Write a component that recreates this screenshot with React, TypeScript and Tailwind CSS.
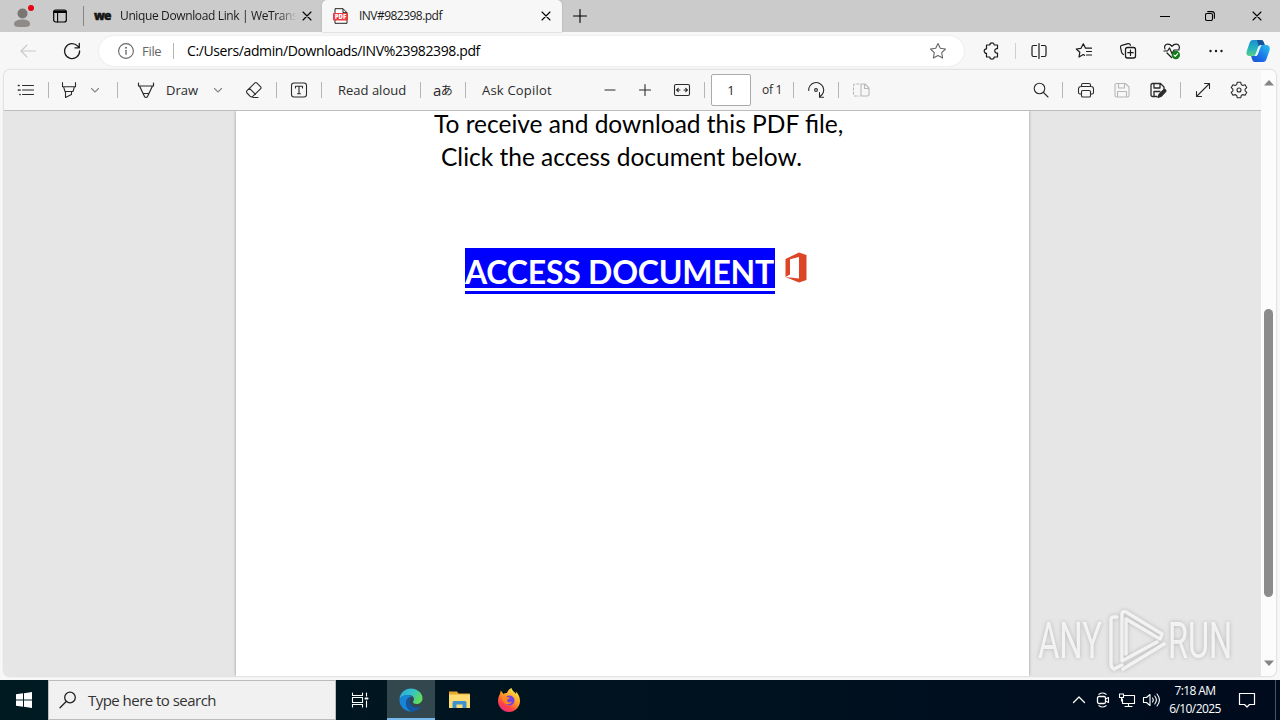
import type { ReactNode } from "react";
import clsx from "clsx";

function Icon({ className, size = 18, children }: { className?: string; size?: number; children: ReactNode }) {
  return (
    <svg
      width={size}
      height={size}
      viewBox={`0 0 ${size} ${size}`}
      fill="none"
      stroke="currentColor"
      strokeWidth="1.1"
      strokeLinecap="round"
      strokeLinejoin="round"
      className={clsx("shrink-0", className)}
    >
      {children}
    </svg>
  );
}

function Sep({ className }: { className?: string }) {
  return <div className={clsx("h-4 w-px shrink-0 bg-[#b5b5b5]", className)} />;
}

function CloseIcon({ className }: { className?: string }) {
  return (
    <Icon size={10} className={className}>
      <path d="M1 1l8 8M9 1L1 9" />
    </Icon>
  );
}

function Chevron({ className }: { className?: string }) {
  return (
    <Icon size={10} className={clsx("text-[#888]", className)}>
      <path d="M1.500 3.500L5 7l3.500-3.500" />
    </Icon>
  );
}

function TabStrip() {
  return (
    <div className="flex h-8 shrink-0 items-center bg-[#cbcbcb]">
      <svg width="24" height="24" viewBox="0 0 24 24" className="ml-3 shrink-0">
        <circle cx="10.500" cy="9.500" r="5" fill="#797573" />
        <path d="M2 20c0-3 3.500-4.500 8.500-4.500S18 17 18 20s-3.500 3-8 3-8 0-8-3z" fill="#8e8a88" />
        <circle cx="19" cy="4" r="3" fill="#e30613" />
      </svg>
      <Icon size={16} className="ml-4">
        <rect x="1.700" y="2" width="12.600" height="12" rx="2" strokeWidth="1.200" />
        <path d="M2.500 3.800h11" strokeWidth="2.400" />
        <path d="M5.600 5v9" />
      </Icon>
      <div className="ml-[15px] h-5 w-px bg-[#858585]" />

      <div className="ml-2.5 flex w-[221px] items-center">
        <span className="w-[26px] font-['Open_Sans'] text-[12px] leading-4 font-extrabold tracking-[-0.9px] text-[#151515] [-webkit-text-stroke:0.5px_#151515]">
          we
        </span>
        <span className="w-[177px] font-['Open_Sans'] text-[12px] leading-4 tracking-[-0.37px] whitespace-nowrap text-[#1b1b1b] [mask-image:linear-gradient(to_right,black_157px,transparent_177px)]">
          Unique Download Link | WeTrans
        </span>
        <CloseIcon className="ml-[5px]" />
      </div>

      <div className="ml-[7px] flex h-8 w-[240px] items-center rounded-t-[5px] bg-[#f7f7f7] shadow-[0_0_2px_#aaa]">
        <svg width="16" height="16" viewBox="0 0 16 16" className="ml-[11px] shrink-0">
          <path d="M2 .7h8l4 4v10.600H2z" fill="#fff" stroke="#222" />
          <path d="M10 .7v4h4" fill="none" stroke="#222" />
          <rect x="0" y="5" width="15" height="7.500" rx="1" fill="#ec3b3f" />
          <text x="7.500" y="11" textAnchor="middle" fontFamily="Open Sans" fontSize="6" fontWeight="800" fill="#fff">
            PDF
          </text>
        </svg>
        <span className="ml-2.5 w-[182px] font-['Open_Sans'] text-[12px] leading-4 tracking-[-0.53px] text-[#1b1b1b]">INV#982398.pdf</span>
        <CloseIcon />
      </div>

      <Icon size={14} className="ml-[11px]">
        <path d="M7 .5v13M.5 7h13" />
      </Icon>
      <Icon size={10} className="mr-[35px] ml-auto">
        <path d="M0 5.500h10" />
      </Icon>
      <Icon size={10} className="mr-[37px]">
        <rect x=".5" y="2.500" width="7" height="7" rx="1.500" />
        <path d="M2.700.6H7A2.400 2.400 0 0 1 9.400 3v4.300" />
      </Icon>
      <CloseIcon className="mr-[18px]" />
    </div>
  );
}

function CopilotLogo() {
  return (
    <svg width="24" height="24" viewBox="0 0 24 24" className="ml-[21px] shrink-0">
      <defs>
        <linearGradient id="cpA" x1="0" y1="0" x2="0" y2="1">
          <stop offset="0" stopColor="#1b8fce" />
          <stop offset=".5" stopColor="#23b1c0" />
          <stop offset="1" stopColor="#58d08b" />
        </linearGradient>
        <linearGradient id="cpB" x1="1" y1="0" x2="0" y2="1">
          <stop offset="0" stopColor="#29c3ef" />
          <stop offset=".6" stopColor="#1a6fe8" />
          <stop offset="1" stopColor="#1b50d0" />
        </linearGradient>
      </defs>
      <path d="M7 1h8c2 0 2.500 1.500 3 3l.8 2h-3c-2 0-2.800 1-3.400 3l-1.800 5c-.6 2-1.500 3-3.600 3H3.500C.5 17 0 14.500.8 12L3.500 4C4.200 2 5 1 7 1z" fill="url(#cpA)" />
      <path d="M11 1h4c2 0 2.500 1.500 3 3l.8 2h-3c-1.500 0-2.500.7-3 2z" fill="#14539a" />
      <path d="M17 23H9c-2 0-2.500-1.500-3-3l-.9-3h3c2 0 2.800-1 3.400-3l1.800-5c.6-2 1.500-3 3.600-3h3.600c3 0 3.800 3 3 5.500L20.500 20c-.7 2-1.500 3-3.500 3z" fill="url(#cpB)" />
      <path d="M12 8.500c.7-1.800 1.700-2.500 3.300-2.500l-3.500 9.500c-.6 1-1.300 1.500-2.900 1.500z" fill="#e9fbff" />
    </svg>
  );
}

function AddressRow() {
  return (
    <div className="flex h-[38px] shrink-0 items-center text-[#1b1b1b]">
      <Icon className="ml-[19px] text-[#c9c9c9]">
        <path d="M16.500 9H2M8 3L2 9l6 6" />
      </Icon>
      <Icon className="ml-[26px]">
        <path d="M16.600 9A7.500 7.500 0 1 1 14.500 3.900L16.300 5.700M16.300 1.500v4.300H12" strokeWidth="1.300" />
      </Icon>
      <div className="ml-[18px] flex h-[30px] w-[865px] items-center rounded-full bg-white shadow-[0_0_2px_#ddd]">
        <Icon size={16} className="ml-[19px] text-[#666]">
          <circle cx="8" cy="8" r="7.400" />
          <path d="M8 7.300v4" strokeWidth="1.300" />
          <circle cx="8" cy="4.800" r=".4" fill="currentColor" />
        </Icon>
        <span className="ml-2 w-[31px] font-['Open_Sans'] text-[13px] leading-5 tracking-[-0.3px] text-[#666]">File</span>
        <Sep className="bg-[#999]" />
        <span className="ml-[13px] font-['Open_Sans'] text-[14px] leading-5 tracking-[-0.38px] whitespace-nowrap text-black">
          C:/Users/admin/Downloads/INV%23982398.pdf
        </span>
        <Icon className="mr-[17px] ml-auto text-[#666]">
          <path d="M9 1.500l2.300 4.800 5.200.7-3.800 3.700.9 5.300L9 13.500 4.400 16l.9-5.300L1.500 7l5.200-.7z" />
        </Icon>
      </div>
      <Icon className="ml-[19px]">
        <path
          d="M3.500 3h3.300a2.200 2.200 0 0 1 4.400 0h3.300v3.600h-1a2.300 2.300 0 0 0 0 4.500h1V15h-3.300a2.200 2.200 0 0 1-4.400 0H3.500v-3.600a2.300 2.300 0 0 1 0-4.600z"
          strokeWidth="1.200"
        />
      </Icon>
      <Sep className="ml-[14px] bg-[#d0d0d0]" />
      <Icon className="ml-3.5">
        <path d="M9 1.500v15M6.500 3.500h-3A1.500 1.500 0 0 0 2 5v8a1.500 1.500 0 0 0 1.500 1.500h3M11.500 3.500h3A1.500 1.500 0 0 1 16 5v8a1.500 1.500 0 0 1-1.500 1.500h-3" strokeWidth="1.200" />
      </Icon>
      <Icon className="ml-[27px]">
        <path d="M9.500 13.300L8.300 12.500 4 15l.8-4.700L1.300 7 6 6.300l2.300-4.500 2.200 4.400h6M11.500 9.500h5M11.500 13h5" strokeWidth="1.200" />
      </Icon>
      <Icon className="ml-[26px]">
        <rect x="6.500" y="5.500" width="10" height="10.500" rx="2" strokeWidth="1.300" />
        <path d="M11.500 8v5.500M8.800 10.700h5.400M4.500 12.500c-1-.5-1.500-1-1.800-2L1.500 5.300c-.2-1 .3-1.700 1.300-2L9 1.600c1.300-.3 2 .2 2.500 1.600" strokeWidth="1.200" />
      </Icon>
      <Icon className="ml-[26px]">
        <path d="M2 7C.8 4.500 2.300 2.200 4.700 2.200 6.500 2.200 8 3 9 4.300c1-1.300 2.500-2.100 4.300-2.100C15.800 2.200 17.200 4.500 16 7.300M4 11l4.500 4.500M1 9h3.500L6.500 6 9 11.500l2-3.500h5" strokeWidth="1.200" />
        <circle cx="12.800" cy="13" r="4.200" fill="#127b1a" stroke="none" />
        <path d="M11 13.200l1.200 1.200 2.500-2.700" stroke="#fff" />
      </Icon>
      <Icon className="ml-[26px]">
        <g fill="currentColor" stroke="none">
          <circle cx="3.500" cy="9" r="1.200" />
          <circle cx="9" cy="9" r="1.200" />
          <circle cx="14.500" cy="9" r="1.200" />
        </g>
      </Icon>
      <CopilotLogo />
    </div>
  );
}

function PdfToolbar() {
  return (
    <div className="flex h-[41px] shrink-0 items-center border-b border-[#bdbdbd] bg-[#f7f7f7] font-['Open_Sans'] text-[13px] leading-5 whitespace-nowrap text-[#2b2b2b]">
      <Icon className="ml-[13px]">
        <path d="M5.500 4.500h11M5.500 9h11M5.500 13.500h11" />
        <path d="M1.500 4.500h.5M3 9h0M3 13.500h0M1.500 9h.3" strokeWidth="1.700" />
      </Icon>
      <Sep className="ml-[13px]" />
      <Icon className="ml-[11px]">
        <path d="M2.500 1.500v4.200h13V1.500M3.500 5.700l1.500 4.800h8l1.500-4.800M5.500 10.500v6l6-3v-3" />
      </Icon>
      <Chevron className="ml-3" />
      <Sep className="ml-[17px]" />
      <Icon className="ml-[19px]">
        <path d="M1.500 2v3h15V2M2.500 5l5 10.500a1.700 1.700 0 0 0 3 0l5-10.500M6.500 12.500h5" strokeWidth="1.200" />
      </Icon>
      <span className="ml-[11px] w-[34px]">Draw</span>
      <Chevron className="ml-[13px]" />
      <Icon className="ml-[22px]">
        <path d="M2 9.700L10 1.900a1.200 1.200 0 0 1 1.700 0l4 4a1.200 1.200 0 0 1 0 1.700L8 15.200a2.200 2.200 0 0 1-3 0L2 12a1.600 1.600 0 0 1 0-2.300zM4.500 7.300l6 6M8 16.500h5" />
      </Icon>
      <Sep className="ml-[13px]" />
      <Icon className="ml-[13px]">
        <rect x="1.500" y="2" width="15" height="14" rx="2.500" />
        <path d="M5.500 7V5.200h7V7M9 5.200v7.600M7.500 12.800h3" />
      </Icon>
      <Sep className="ml-[13px]" />
      <span className="ml-4 w-[70px]">Read aloud</span>
      <Sep className="ml-3" />
      <span className="ml-3 flex w-5 items-center">
        <span className="text-[15px] tracking-[-0.5px]">a</span>
        <span className="font-['Noto_Sans_CJK_JP',sans-serif] text-[12px]">あ</span>
      </span>
      <Sep className="ml-3" />
      <span className="ml-4 w-[72px] tracking-[0.2px]">Ask Copilot</span>
      <Icon className="ml-[47px]">
        <path d="M4 9h10" />
      </Icon>
      <Icon className="ml-[17px]">
        <path d="M3.500 9h11M9 3.500v11" />
      </Icon>
      <Icon className="ml-[19px]">
        <rect x="1.500" y="3.500" width="15" height="11" rx="1.500" />
        <path d="M7 9H3.800M5.300 7.300L3.600 9l1.700 1.700M11 9h3.200M12.700 7.300L14.400 9l-1.700 1.700" />
      </Icon>
      <Sep className="ml-[13px]" />
      <div className="ml-1.5 flex h-8 w-10 items-center justify-center rounded-[2px] border border-[#aaa] bg-white">1</div>
      <span className="ml-[11px] w-5 text-[12px] tracking-[-0.3px]">of 1</span>
      <Sep className="ml-[11px]" />
      <Icon className="ml-[13px]">
        <path d="M1.700 9.500A7.500 7.500 0 1 1 13 15.500M12.500 11.500v4.700h4" />
        <circle cx="9" cy="9" r="1.400" />
      </Icon>
      <Sep className="ml-[13px]" />
      <Icon className="ml-[13px] text-[#b8b8b8]">
        <path d="M9 3h4l4 4v6.500a1.500 1.500 0 0 1-1.500 1.500H9zM12.500 3v4.500H17" />
        <path d="M7 3H3a1.500 1.500 0 0 0-1.500 1.500v9A1.500 1.500 0 0 0 3 15h4" strokeDasharray="2.200 2" />
      </Icon>
      <Icon className="ml-auto">
        <circle cx="7.500" cy="7.500" r="5.300" />
        <path d="M11.500 11.500l4.500 4.500" />
      </Icon>
      <Sep className="ml-3" />
      <Icon className="ml-3.5">
        <path d="M4.500 5.500V4A1.500 1.500 0 0 1 6 2.500h6A1.500 1.500 0 0 1 13.500 4v1.500M4.500 13H3a1.500 1.500 0 0 1-1.500-1.500V8A2.500 2.500 0 0 1 4 5.500h10A2.500 2.500 0 0 1 16.500 8v3.500A1.500 1.500 0 0 1 15 13h-1.500" />
        <rect x="4.500" y="9.500" width="9" height="6.500" rx="1.300" />
      </Icon>
      <Icon className="ml-[18px] text-[#b8b8b8]">
        <path d="M3.500 2.500h9L16 6v8.500a1.500 1.500 0 0 1-1.500 1.500h-11A1.500 1.500 0 0 1 2 14.500V4a1.500 1.500 0 0 1 1.500-1.500zM5.500 2.500V7h6V2.500M4.500 16v-5.500h9V16" />
      </Icon>
      <Icon className="ml-[18px]">
        <path d="M8 15.500H3.500A1.500 1.500 0 0 1 2 14V4a1.500 1.500 0 0 1 1.500-1.500h8L15 6v2M5 2.500V7h6V2.500M5 15.500v-5h6" strokeWidth="1.300" />
        <path d="M9 16.500l1-3.200 4.500-4.500a1.300 1.300 0 0 1 2 2L12 15.500z" fill="currentColor" />
      </Icon>
      <Sep className="ml-[13px]" />
      <Icon className="ml-[13px]">
        <path d="M2.500 15.500l13-13M10.500 2.500h5v5M2.500 10.500v5h5" />
      </Icon>
      <Icon className="mr-[13px] ml-[18px]">
        <path d="M7.200 1.300h3.600l.5 2.300 1.500.9 2.300-.8 1.700 3L15.100 8.200v1.600l1.700 1.500-1.700 3-2.300-.7-1.500.8-.5 2.300H7.200l-.5-2.300-1.500-.8-2.300.7-1.700-3 1.700-1.500V8.200L1.200 6.700l1.700-3 2.300.8 1.500-.9z" />
        <circle cx="9" cy="9" r="2" />
      </Icon>
    </div>
  );
}

function OfficeLogo() {
  return (
    <svg width="22" height="32" viewBox="0 0 22 32" className="mt-[4px] ml-[10px] shrink-0">
      <path d="M.5 7L14 .5 21.500 3v25L14 30.500.5 25l13.500 1.500V5L5 7.200v15.300L.5 25z" fill="#dc4526" />
    </svg>
  );
}

function Watermark() {
  return (
    <div className="absolute top-[606px] left-[1038px] flex h-[70px] w-[200px] items-center text-white/75 drop-shadow-[0_0_2px_rgba(0,0,0,0.28)]">
      <span className="w-[70px] origin-left scale-x-[0.655] font-[Roboto] text-[50px] leading-none font-normal">ANY</span>
      <svg width="58" height="64" viewBox="0 0 58 64" fill="none" stroke="currentColor" strokeWidth="3.400" strokeLinejoin="round" strokeLinecap="round" className="shrink-0">
        <path d="M9 8H6c-2 0-3 1-3 3v44c0 2 1 4 3 5l8-4M14 12v40l35-19M14 12V5c0-2 2-3 4-2l36 22-2 5-34-20v35M15 60l41-25" />
      </svg>
      <span className="ml-[2px] origin-left scale-x-[0.65] font-[Roboto] text-[50px] leading-none font-normal">RUN</span>
    </div>
  );
}

function DocumentView() {
  return (
    <div className="flex min-h-0 flex-1 overflow-hidden bg-[#e6e6e6]">
      <div className="ml-[232px] w-[793px] bg-white shadow-[0_0_3px_rgba(0,0,0,0.35)]">
        <div className="pl-[198px] font-[Lato] text-[24.500px] leading-[33px] whitespace-pre text-black">
          <p className="-mt-1">To receive and download this PDF file,</p>
          <p className="ml-[7px]">Click the access document below.</p>
        </div>
        <div className="mt-[75px] ml-[229px] flex items-start">
          <div className="h-[46px] w-[310px] bg-[#0000ff] font-[Lato] text-[32px] leading-10 font-bold whitespace-nowrap text-white">
            <div className="h-[40px] pt-1 tracking-[-0.22px]">ACCESS DOCUMENT</div>
            <div className="h-[3px] bg-white" />
          </div>
          <OfficeLogo />
        </div>
      </div>
    </div>
  );
}

function Scrollbar() {
  return (
    <div className="flex w-[15px] shrink-0 flex-col items-center bg-[#fcfcfc] text-[#858585]">
      <svg width="10" height="6" viewBox="0 0 10 6" className="mt-2.5">
        <path d="M0 5.500h10L5 0z" fill="currentColor" />
      </svg>
      <div className="mt-[223px] h-[288px] w-[9px] rounded-full bg-[#8b8b8b]" />
      <svg width="10" height="6" viewBox="0 0 10 6" className="mt-auto mb-[10px]">
        <path d="M0 .5h10L5 6z" fill="currentColor" />
      </svg>
    </div>
  );
}

function EdgeLogo() {
  return (
    <svg width="24" height="24" viewBox="0 0 24 24">
      <defs>
        <linearGradient id="edgeTop" x1="0" y1="0" x2="1" y2=".4">
          <stop offset="0" stopColor="#2aa8e0" />
          <stop offset=".6" stopColor="#36c4c5" />
          <stop offset="1" stopColor="#5fdb5d" />
        </linearGradient>
      </defs>
      <path d="M.5 11C1 5 6 .5 12 .5S23.500 5 23.500 10c0 4-3 6-6 6-2.300 0-3.500-1-3.500-2 0-.8 1-1.300 1-3 0-2-2-4-5-4-4.500 0-8.300 2-9.500 4z" fill="url(#edgeTop)" />
      <path d="M.5 11C2 8 5.500 6.800 9 7c3 .2 4.500 1.500 4.500 1.500C10 8.500 7 11 7 15c0 4.500 3.500 7.800 6 8.500C6 24 0 18.500.5 11z" fill="#1784d8" />
      <path d="M7.500 15c0-3.500 2-5.500 4.500-6-.7.800-1.500 2-1.500 4 0 4 3.500 6.500 7 6.500 2.300 0 3.800-1 4.500-1.200-1.500 3-5 5.200-9 5.200-3-.5-5.500-4-5.500-8.500z" fill="#1257a5" />
    </svg>
  );
}

function FirefoxLogo() {
  return (
    <svg width="24" height="24" viewBox="0 0 24 24">
      <defs>
        <linearGradient id="ffx" x1=".8" y1="0" x2=".2" y2="1">
          <stop offset="0" stopColor="#fff04a" />
          <stop offset=".45" stopColor="#ff9a25" />
          <stop offset=".75" stopColor="#ff3f48" />
          <stop offset="1" stopColor="#e52891" />
        </linearGradient>
      </defs>
      <path d="M3 6l.8-3.500L6.500 6c1-.8 2.300-1 3.500-1 1-3 3-4.500 4.500-5 .5 2.500 3 4 4.500 6l-.2-2.500C21.500 6 23 9 23 13c0 6-5 11-11 11S1 19 1 13c0-2.800.8-5 2-7z" fill="url(#ffx)" />
      <circle cx="12.500" cy="12.500" r="5" fill="#7542e5" />
      <path d="M5 8.500c2-1 4 .2 5.500.8l2.500.3c0 1.500-3 1.400-3 3s2.500 2.500 5 1c-1 3-6 4-8.500.5C5.500 12.500 5 10 5 8.500z" fill="#ff8a1e" />
    </svg>
  );
}

function Taskbar() {
  return (
    <div className="flex h-10 shrink-0 items-center bg-linear-to-r from-[#001a22] to-[#000b1d] text-white">
      <div className="flex w-12 justify-center">
        <svg width="16" height="16" viewBox="0 0 16 16" fill="#fff">
          <path d="M0 2.300L7 1.300v6.200H0zM8 1.200L16 0v7.500H8zM0 8.500h7v6.200l-7-1zM8 8.500h8V16l-8-1.200z" />
        </svg>
      </div>
      <div className="flex h-10 w-[288px] items-center border border-[#bcbcbc] bg-[#f1f1f1] text-[#222]">
        <Icon className="ml-2.5">
          <circle cx="11" cy="6.500" r="5.300" strokeWidth="1.300" />
          <path d="M7.200 10.500L1 16.700" strokeWidth="1.300" />
        </Icon>
        <span className="ml-[11px] font-['Open_Sans'] text-[15px] leading-5 tracking-[-0.53px] text-[#333]">Type here to search</span>
      </div>
      <Icon className="ml-[15px]">
        <path d="M1.500 2v2.500h10V2M1.500 16v-2.500h10V16M1.500 6.500h10v5h-10zM15.500 2v3M15.500 10v6" />
        <path d="M14.500 7.500h2" strokeWidth="2" />
      </Icon>
      <div className="ml-[18px] flex h-10 w-12 items-center justify-center border-b-2 border-[#76b9ed] bg-[#33474f] pt-[2px]">
        <EdgeLogo />
      </div>
      <svg width="22" height="20" viewBox="0 0 22 20" className="ml-[14px]">
        <path d="M0 1.500h8l1.500 2H20a1 1 0 0 1 1 1V18H0z" fill="#e7a92c" />
        <path d="M0 4.500h21V18H0z" fill="#ffdc73" />
        <path d="M3.500 18v-5.500a1.500 1.500 0 0 1 1.500-1.500h11a1.500 1.500 0 0 1 1.500 1.500V18h-4v-3.500h-6V18z" fill="#3e91cd" />
      </svg>
      <div className="ml-[26px]">
        <FirefoxLogo />
      </div>

      <Icon size={14} className="mr-[9px] ml-auto">
        <path d="M1.500 9.500L7 4l5.500 5.500" strokeWidth="1.300" />
      </Icon>
      <Icon size={16} className="mr-[7px]">
        <rect x="2.500" y="4.500" width="8" height="7" rx="1.500" strokeWidth="1.300" />
        <path d="M10.500 7l3-1.500v5l-3-1.500M4 2.300c2-1.500 5-1.500 7 0M4 13.700c2 1.500 5 1.500 7 0" />
      </Icon>
      <Icon size={18} className="mr-1.5">
        <path d="M6 4.500h10.500v8H4.500V8M10.500 12.500V15M7 15.500h7M1.500 3h4v3.500h-4zM3.500 6.500V10" />
      </Icon>
      <Icon size={18} className="mr-[9px]">
        <path d="M1.500 6.500h3l3.500-3v11l-3.500-3h-3zM10.500 7c1 1.300 1 2.700 0 4M12.800 5c2 2.500 2 5.500 0 8M15 3c3 3.700 3 8.300 0 12" />
      </Icon>
      <div className="mr-[17px] w-[52px] text-center font-['Open_Sans'] text-[12px] leading-[18px] tracking-[-0.6px] whitespace-nowrap">
        <div>7:18 AM</div>
        <div>6/10/2025</div>
      </div>
      <Icon size={18} className="mr-[19px]">
        <path d="M1.500 2.500h15v11h-5L9 16l-2.500-2.500h-5z" strokeWidth="1.200" />
      </Icon>
      <div className="mr-1 h-10 w-px bg-[#4b5562]" />
    </div>
  );
}

export default function App() {
  return (
    <div className="relative flex h-[720px] w-[1280px] flex-col overflow-hidden bg-[#f7f7f7]">
      <TabStrip />
      <AddressRow />
      <div className="mx-1 mb-1 flex min-h-0 flex-1 overflow-hidden rounded-md shadow-[0_0_2px_#aaa]">
        <div className="flex min-w-0 flex-1 flex-col">
          <PdfToolbar />
          <DocumentView />
        </div>
        <Scrollbar />
      </div>
      <Taskbar />
      <Watermark />
    </div>
  );
}
